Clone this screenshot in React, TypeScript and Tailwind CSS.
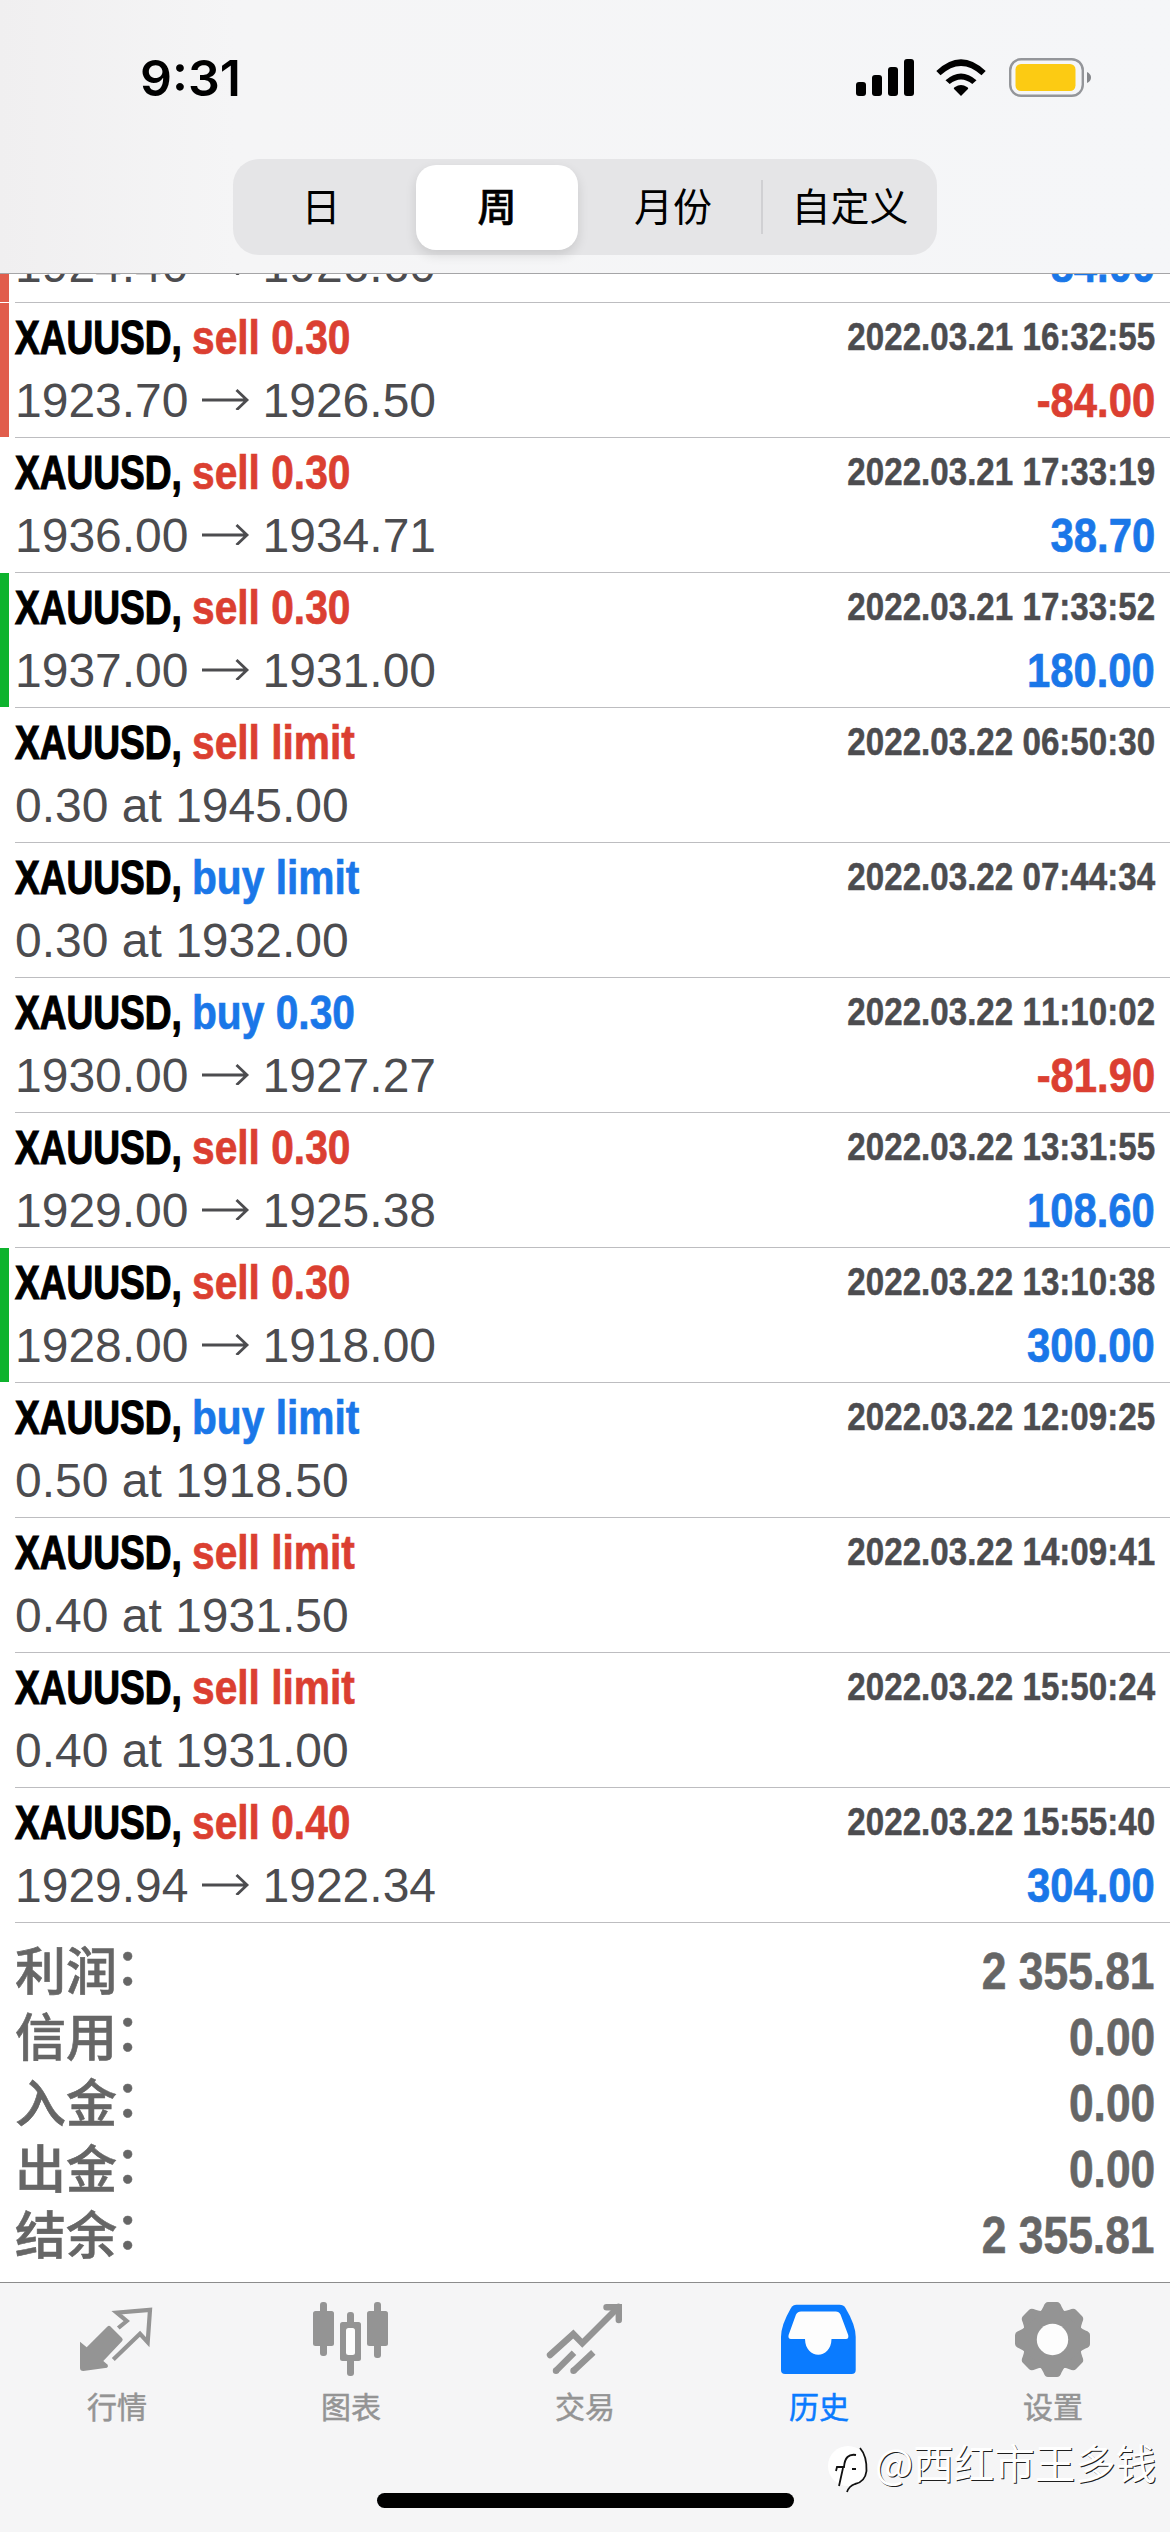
import React from 'react';

type Deal = {
    side: 'buy' | 'sell';
    // Volume for a deal, "limit" for a pending order
    kind: string;
    time: string;
    from?: string;
    to?: string;
    order?: string;
    profit?: string;
    mark?: 'red' | 'green';
};

const deals: Deal[] = [
    { side: 'sell', kind: '0.30', time: '2022.03.21 16:32:50', from: '1924.40', to: '1926.60', profit: '84.00', mark: 'red' },
    { side: 'sell', kind: '0.30', time: '2022.03.21 16:32:55', from: '1923.70', to: '1926.50', profit: '-84.00', mark: 'red' },
    { side: 'sell', kind: '0.30', time: '2022.03.21 17:33:19', from: '1936.00', to: '1934.71', profit: '38.70' },
    { side: 'sell', kind: '0.30', time: '2022.03.21 17:33:52', from: '1937.00', to: '1931.00', profit: '180.00', mark: 'green' },
    { side: 'sell', kind: 'limit', time: '2022.03.22 06:50:30', order: '0.30 at 1945.00' },
    { side: 'buy', kind: 'limit', time: '2022.03.22 07:44:34', order: '0.30 at 1932.00' },
    { side: 'buy', kind: '0.30', time: '2022.03.22 11:10:02', from: '1930.00', to: '1927.27', profit: '-81.90' },
    { side: 'sell', kind: '0.30', time: '2022.03.22 13:31:55', from: '1929.00', to: '1925.38', profit: '108.60' },
    { side: 'sell', kind: '0.30', time: '2022.03.22 13:10:38', from: '1928.00', to: '1918.00', profit: '300.00', mark: 'green' },
    { side: 'buy', kind: 'limit', time: '2022.03.22 12:09:25', order: '0.50 at 1918.50' },
    { side: 'sell', kind: 'limit', time: '2022.03.22 14:09:41', order: '0.40 at 1931.50' },
    { side: 'sell', kind: 'limit', time: '2022.03.22 15:50:24', order: '0.40 at 1931.00' },
    { side: 'sell', kind: '0.40', time: '2022.03.22 15:55:40', from: '1929.94', to: '1922.34', profit: '304.00' },
];

const totals = [
    { label: '利润', value: '2 355.81' },
    { label: '信用', value: '0.00' },
    { label: '入金', value: '0.00' },
    { label: '出金', value: '0.00' },
    { label: '结余', value: '2 355.81' },
];

const periods = ['日', '周', '月份', '自定义'];

// Bold text is condensed with scale-x-* on each element
const bold = "font-['Liberation_Sans',sans-serif] font-bold whitespace-nowrap [font-kerning:none]";
const cjk = "font-['Noto_Sans_CJK_SC',sans-serif]";

function StatusBar() {
    return (
        <div className="flex h-[159px] items-start justify-between pr-[79px] pl-[140px] pt-[48px]">
            <span className="font-['Inter',sans-serif] text-[50px] leading-[61px] font-semibold">9:31</span>
            <svg width="236" height="60" viewBox="0 0 236 60" className="mt-[-1px]">
                <rect x="1" y="35" width="10" height="14" rx="3" />
                <rect x="17" y="28" width="10" height="21" rx="3" />
                <rect x="33" y="20" width="10" height="29" rx="3" />
                <rect x="49" y="12" width="10" height="37" rx="3" />
                <path d="M106 49 L98.8 41.8 Q98.6 40.6 100 40 Q106 36 112 40 Q113.4 40.6 113.2 41.8 Z" />
                <path d="M90.5 33.2 Q106 19.6 121.5 33.2 L117.3 37 Q106 28 94.7 37 Z" />
                <path d="M81.3 24 Q106 0.5 130.7 24 L126.5 28.2 Q106 9.6 85.5 28.2 Z" />
                <rect x="155.2" y="12.2" width="72.6" height="36.6" rx="11" fill="none" stroke="#94969a" strokeWidth="2.4" />
                <rect x="160.5" y="17" width="60" height="27" rx="5.5" fill="#fccb13" />
                <path d="M232 25 Q236 27 236 30.5 Q236 34 232 36 Z" fill="#85878b" />
            </svg>
        </div>
    );
}

function PeriodPicker() {
    return (
        <div className="mx-auto flex h-[96px] w-[704px] items-center rounded-[26px] bg-[#e5e5e7]">
            {periods.map((period, index) => (
                <div
                    key={period}
                    className={
                        index === 1
                            ? 'mx-[7px] flex h-[85px] w-[162px] items-center justify-center rounded-[20px] bg-white font-medium shadow-[0_5px_12px_rgba(0,0,0,0.12)] [-webkit-text-stroke:0.6px]'
                            : index === 3
                              ? 'flex h-[54px] w-[176px] items-center justify-center border-l-2 border-[#d0d0d3]'
                              : 'flex w-[176px] items-center justify-center'
                    }>
                    <span className={`${cjk} mb-[6px] text-[39px] leading-[48px] whitespace-nowrap`}>{period}</span>
                </div>
            ))}
        </div>
    );
}

function Arrow() {
    return (
        <svg width="48" height="24" viewBox="0 0 48 24" className="mx-[13px] mb-[5px]" fill="none" stroke="#4c4c4f" strokeWidth="2.8">
            <path d="M0 14 H45 M34.5 4 L45 14 L34.5 24" />
        </svg>
    );
}

function DealRow({ deal }: { deal: Deal }) {
    return (
        <div className="flex h-[135px] shrink-0">
            <div
                className={
                    deal.mark === 'red' ? 'h-[134px] w-[9px] bg-[#e15d4c]' : deal.mark === 'green' ? 'h-[134px] w-[9px] bg-[#0eb32e]' : 'w-[9px]'
                }
            />
            <div className="ml-[6px] flex flex-1 justify-between border-b border-[#bdbdc0] pt-[3px] pr-[15px]">
                <div>
                    <div className={`${bold} flex text-[48px] leading-[63px]`}>
                        <span className="w-[177px]">
                            <span className="inline-block origin-left scale-x-[0.772] [-webkit-text-stroke:1.2px]">XAUUSD,</span>
                        </span>
                        <span
                            className={`inline-block origin-left scale-x-[0.848] [-webkit-text-stroke:0.7px] ${
                                deal.side === 'buy' ? 'text-[#1a77e8]' : 'text-[#db3f31]'
                            }`}>
                            {deal.side} {deal.kind}
                        </span>
                    </div>
                    <div className="flex items-center font-['Liberation_Sans',sans-serif] text-[48px] leading-[63px] text-[#4c4c4f] [font-kerning:none]">
                        {deal.order ?? (
                            <>
                                {deal.from}
                                <Arrow />
                                {deal.to}
                            </>
                        )}
                    </div>
                </div>
                <div className={`${bold} flex flex-col items-end`}>
                    <div className="origin-right scale-x-[0.85] text-[39px] leading-[61px] text-[#4c4c4f] [-webkit-text-stroke:0.5px]">{deal.time}</div>
                    {deal.profit && (
                        <div
                            className={`origin-right scale-x-[0.87] text-[48px] leading-[67px] [-webkit-text-stroke:0.7px] ${
                                deal.profit.startsWith('-') ? 'text-[#db3f31]' : 'text-[#1a77e8]'
                            }`}>
                            {deal.profit}
                        </div>
                    )}
                </div>
            </div>
        </div>
    );
}

function QuotesIcon() {
    return (
        <svg width="80" height="80" viewBox="0 0 80 80">
            <path
                d="M3 41.7 L9.7 47.3 L30.5 26.5 Q32 25 33.5 26.5 L45 38 Q46.5 39.7 45 41.3 L26.3 61 L30.7 64.8 Q31.5 67 30 67.8 L6.3 71 Q3 71 3 68 Z"
                fill="currentColor"
            />
            <path d="M41.3 28 L49.7 21 L39.7 12.7 L73 9.8 L70.7 42.2 L63 33.8 L36.3 59.5" fill="none" stroke="currentColor" strokeWidth="4.2" />
        </svg>
    );
}

function ChartIcon() {
    return (
        <svg width="80" height="80" viewBox="0 0 80 80" fill="currentColor">
            <rect x="2" y="11" width="21" height="35" rx="2.5" />
            <rect x="9" y="2" width="7" height="54" rx="3" />
            <rect x="36" y="12" width="7" height="64" rx="3" />
            <rect x="29" y="22" width="21" height="39" rx="2.5" />
            <rect x="35" y="28" width="9" height="27" rx="2.5" fill="#fdfdfd" />
            <rect x="56" y="11" width="21" height="35" rx="2.5" />
            <rect x="63" y="2" width="7" height="56" rx="3" />
        </svg>
    );
}

function TradeIcon() {
    return (
        <svg width="80" height="80" viewBox="0 0 80 80" fill="none" stroke="currentColor" strokeWidth="6.4">
            <path d="M5 55 L28.3 34 L37.3 43.3 L73.5 7" strokeLinecap="round" />
            <path d="M61.5 7.2 H73.8 V20" strokeLinecap="round" />
            <path d="M11 70.8 L29 52.7 M28.5 70.8 L48.3 52.3" />
            <circle cx="11" cy="70.8" r="3.2" fill="currentColor" stroke="none" />
            <circle cx="28.5" cy="70.8" r="3.2" fill="currentColor" stroke="none" />
        </svg>
    );
}

function HistoryIcon() {
    return (
        <svg width="80" height="80" viewBox="0 0 80 80">
            <path
                d="M17.5 4.7 H60.5 Q64.5 4.7 66.5 8 Q76.7 25 76.7 37 V70 Q76.7 74 72.7 74 H6 Q2 74 2 70 V37 Q2 25 12 8 Q14 4.7 17.5 4.7 Z"
                fill="currentColor"
            />
            <path
                d="M22 11.5 H56.7 Q60 11.5 61.5 14.5 L69.2 35 Q70 39 67 39 H52.5 C52 60 26.5 60 26 39 H12 Q8.8 39 9.6 35 L17 14.5 Q18.7 11.5 22 11.5 Z"
                fill="#fdfdfd"
            />
        </svg>
    );
}

function SettingsIcon() {
    return (
        <svg width="80" height="80" viewBox="0 0 80 80" fill="currentColor">
            <g transform="translate(39.5 39.5)">
                <circle r="30.5" />
                {[0, 45, 90, 135, 180, 225, 270, 315].map((angle) => (
                    <path
                        key={angle}
                        transform={`rotate(${angle})`}
                        d="M-13 -27 Q-10.5 -29.5 -9 -33 Q-7.5 -37.5 -4.5 -37.5 H4.5 Q7.5 -37.5 9 -33 Q10.5 -29.5 13 -27 Z"
                    />
                ))}
                <circle r="15.7" fill="#fdfdfd" />
            </g>
        </svg>
    );
}

const tabs = [
    { label: '行情', icon: QuotesIcon },
    { label: '图表', icon: ChartIcon },
    { label: '交易', icon: TradeIcon },
    { label: '历史', icon: HistoryIcon, active: true },
    { label: '设置', icon: SettingsIcon },
];

function TabBar() {
    return (
        <nav className="flex h-[250px] shrink-0 border-t border-[#8c8c8c] pt-[17px]">
            {tabs.map(({ label, icon: Icon, active }) => (
                <div key={label} className={`flex flex-1 flex-col items-center ${active ? 'text-[#0a7bff]' : 'text-[#949494]'}`}>
                    <Icon />
                    <span className={`${cjk} mt-[9px] text-[30px] leading-[32px] [-webkit-text-stroke:0.5px]`}>{label}</span>
                </div>
            ))}
        </nav>
    );
}

function Watermark() {
    return (
        <div className="absolute top-[2439px] left-[828px] flex items-start">
            <svg width="47" height="56" viewBox="0 0 47 56">
                <circle cx="20" cy="27" r="20" fill="#fff" />
                <path d="M32 9 Q39 17 38.5 32 Q37 43 27 45 Q21 47 19 53" fill="none" stroke="#111" strokeWidth="1.8" />
                <path d="M8 32 L9 28 H16 Q17 14 28 16 M15 29 L11 47 M24 30 H28" fill="none" stroke="#111" strokeWidth="1.8" />
            </svg>
            <span className={`${cjk} text-[40.5px] leading-[46px] whitespace-nowrap text-white [text-shadow:1px_1px_0_rgba(0,0,0,0.9)]`}>
                @西红市王多钱
            </span>
        </div>
    );
}

export default function App() {
    return (
        <div className="relative flex h-[2532px] w-[1170px] flex-col overflow-hidden bg-[#f5f5f6] text-black">
            <header className="h-[274px] shrink-0 border-b border-[#a5a5a7] bg-linear-to-r from-[#f0eff0] via-[#f5f5f6] via-20% to-[#f5f6f8]">
                <StatusBar />
                <PeriodPicker />
            </header>

            <main className="flex flex-1 flex-col justify-end overflow-hidden bg-white">
                {deals.map((deal) => (
                    <DealRow key={deal.time} deal={deal} />
                ))}
                <div className="h-[359px] shrink-0 px-[15px] pt-[14px] text-[#666]">
                    {totals.map(({ label, value }) => (
                        <div key={label} className="flex h-[66px] justify-between">
                            <span className={`${cjk} text-[51px] leading-[62px] font-medium [-webkit-text-stroke:0.6px]`}>
                                {label}
                                <span className="relative top-[-5px] left-[-2px]">：</span>
                            </span>
                            <span className={`${bold} origin-right scale-x-[0.87] text-[51px] leading-[70px] [-webkit-text-stroke:0.6px]`}>
                                {value}
                            </span>
                        </div>
                    ))}
                </div>
            </main>

            <TabBar />
            <div className="absolute top-[2493px] left-[377px] h-[15px] w-[417px] rounded-full bg-black" />
            <Watermark />
        </div>
    );
}
